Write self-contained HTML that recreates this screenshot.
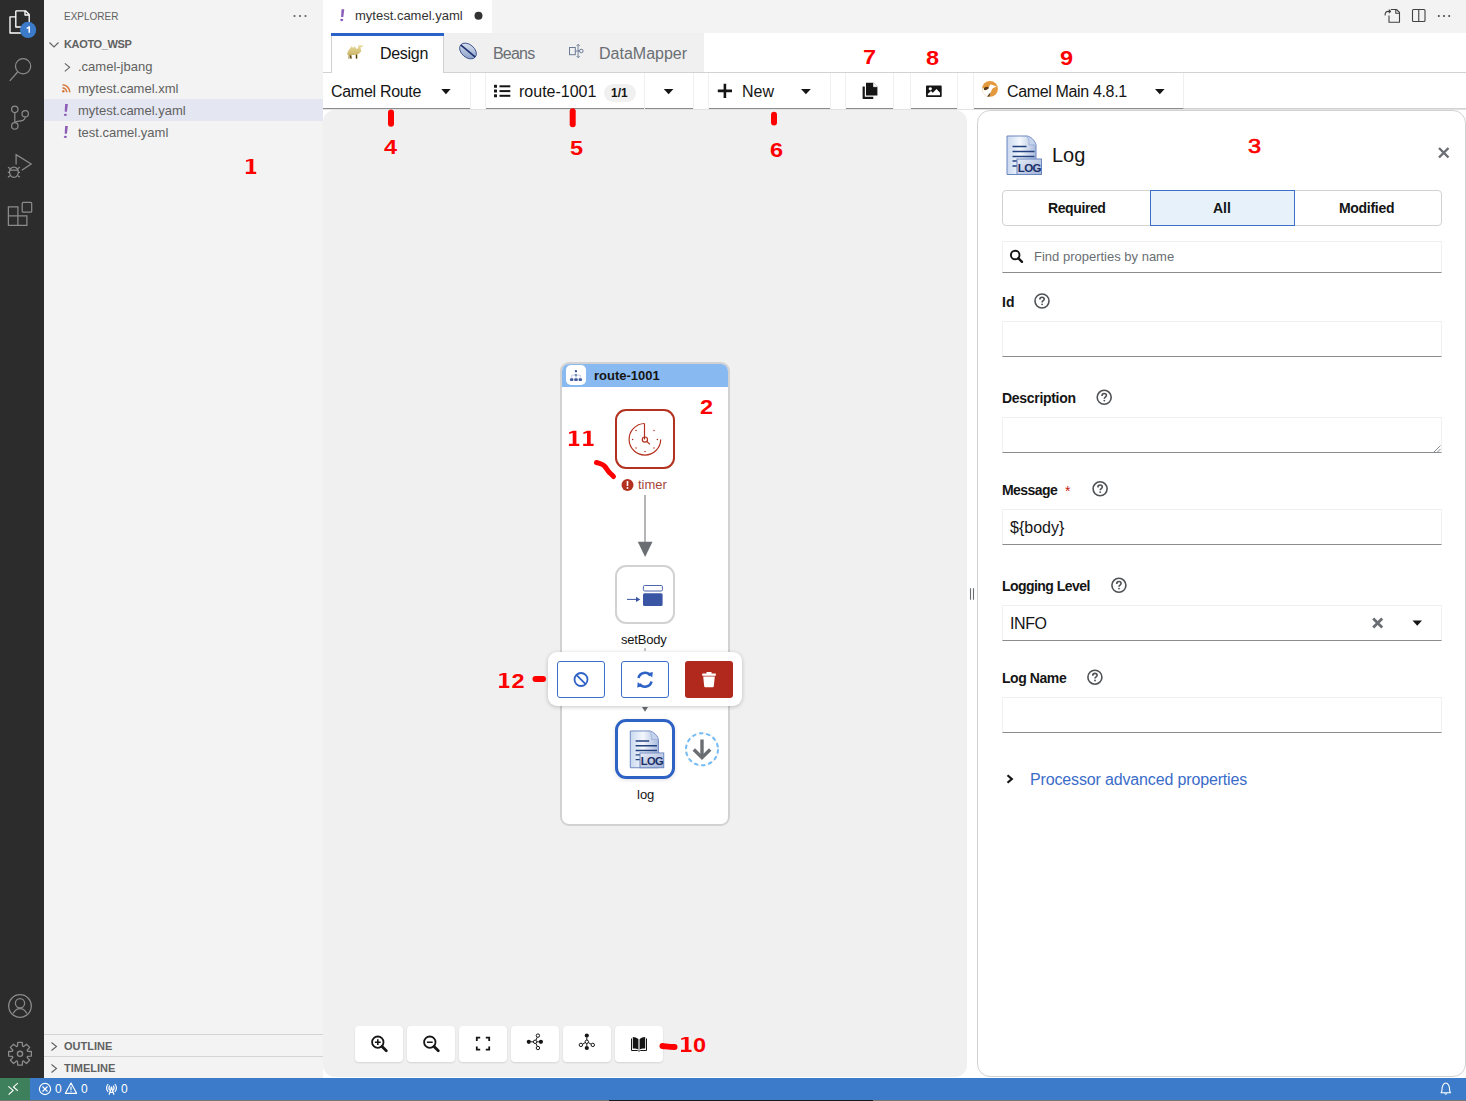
<!DOCTYPE html>
<html><head><meta charset="utf-8">
<style>
*{box-sizing:border-box;margin:0;padding:0}
html,body{width:1466px;height:1101px;overflow:hidden;background:#fff;font-family:"Liberation Sans",sans-serif;position:relative}
.a{position:absolute}
.t{position:absolute;white-space:nowrap;line-height:1}
svg{position:absolute;overflow:visible}
</style></head><body>

<!-- activity bar -->
<div class="a" style="left:0;top:0;width:44px;height:1078px;background:#2c2c2c"></div>

<!-- activity icons -->
<svg style="left:0;top:0" width="44" height="1078">
 <g fill="none" stroke="#fff" stroke-width="1.35" stroke-linejoin="round">
  <path d="M15.8 16.8 H10 V33 H21"/>
  <path d="M15.8 10.8 H25.5 L29.2 14.5 V22 M15.8 10.8 V27 H21"/>
  <path d="M25 11 V15 H29"/>
 </g>
 <circle cx="28.1" cy="29.9" r="8.1" fill="#3b7bc9"/>
 <path d="M26.3 27.9 L28.9 26.3 H30 V32.8 H28.5 V28.2 L26.9 29.1 Z" fill="#fff"/>
 <g fill="none" stroke="#8b8b8b" stroke-width="1.25">
  <circle cx="23.1" cy="66.2" r="7.6"/>
  <path d="M17.6 72 L9.8 80.8"/>
  <circle cx="14.8" cy="109.3" r="3.2"/>
  <circle cx="14.8" cy="125.9" r="3.2"/>
  <circle cx="25.2" cy="113.7" r="3.2"/>
  <path d="M14.8 112.5 V122.7 M25.2 116.9 C25.2 121 21 121 16.5 121.5 L14.8 122.5"/>
  <path d="M16.1 164.5 V154.6 L31.2 164 L21.8 170.2"/>
  <ellipse cx="13.9" cy="172.2" rx="4.4" ry="5.2"/>
  <path d="M9.5 170 H18.3 M8 167.2 L10 168.6 M19.8 167.2 L17.8 168.6 M7.8 172.3 H9.6 M18.2 172.3 H20 M8 177.3 L10 175.8 M19.8 177.3 L17.8 175.8"/>
  <rect x="22.2" y="202.4" width="9.5" height="9.8" rx="1"/>
  <path d="M8.4 206.8 H17.9 V225.3 H8.4 Z M8.4 215.9 H26.9 V225.3 H17.9"/>
  <circle cx="20" cy="1006" r="11.3"/>
  <circle cx="20" cy="1003.2" r="4.6"/>
  <path d="M13.2 1013.4 C15 1010 17.5 1008.6 20 1008.6 C22.5 1008.6 25 1010 26.8 1013.4"/>
  <circle cx="20" cy="1053.8" r="2.6" stroke-width="1.4"/>
 </g>
 <path fill="none" stroke="#8b8b8b" stroke-width="1.3" stroke-linejoin="round" d="M17.45 1046.22 L17.72 1042.43 L22.28 1042.43 L22.55 1046.22 L23.55 1046.63 L26.43 1044.14 L29.66 1047.37 L27.17 1050.25 L27.58 1051.25 L31.37 1051.52 L31.37 1056.08 L27.58 1056.35 L27.17 1057.35 L29.66 1060.23 L26.43 1063.46 L23.55 1060.97 L22.55 1061.38 L22.28 1065.17 L17.72 1065.17 L17.45 1061.38 L16.45 1060.97 L13.57 1063.46 L10.34 1060.23 L12.83 1057.35 L12.42 1056.35 L8.63 1056.08 L8.63 1051.52 L12.42 1051.25 L12.83 1050.25 L10.34 1047.37 L13.57 1044.14 L16.45 1046.63 Z"/>
</svg>

<!-- sidebar -->
<div class="a" style="left:44px;top:0;width:279px;height:1078px;background:#f3f3f3"></div>
<div class="a" style="left:44px;top:99px;width:279px;height:22px;background:#e4e6f1"></div>
<div class="t" style="left:64px;top:11.5px;font-size:10px;color:#616161">EXPLORER</div>
<div class="t" style="left:64px;top:39px;font-size:11px;font-weight:700;color:#616161;letter-spacing:-0.35px">KAOTO_WSP</div>
<div class="t" style="left:78px;top:60px;font-size:13px;color:#616161">.camel-jbang</div>
<div class="t" style="left:78px;top:82px;font-size:13px;color:#616161">mytest.camel.xml</div>
<div class="t" style="left:78px;top:104px;font-size:13px;color:#616161">mytest.camel.yaml</div>
<div class="t" style="left:78px;top:126px;font-size:13px;color:#616161">test.camel.yaml</div>

<svg style="left:0;top:0" width="330" height="1078">
 <g fill="#616161"><circle cx="294.5" cy="16" r="1.1"/><circle cx="300" cy="16" r="1.1"/><circle cx="305.5" cy="16" r="1.1"/></g>
 <g fill="none" stroke="#616161" stroke-width="1.1">
  <path d="M49.5 42.5 L54 47 L58.5 42.5"/>
  <path d="M64.8 63.3 L69.6 67.3 L64.8 71.3"/>
  <path d="M51.5 1042.5 L56.5 1046.5 L51.5 1050.5"/>
  <path d="M51.5 1064.5 L56.5 1068.5 L51.5 1072.5"/>
 </g>
 <g fill="none" stroke="#d5773a" stroke-width="1.6">
  <path d="M62.5 84.8 A7.4 7.4 0 0 1 69.7 92.2"/>
  <path d="M62.5 87.9 A4.3 4.3 0 0 1 66.7 92.2"/>
 </g>
 <circle cx="63.3" cy="91.3" r="1.2" fill="#d5773a"/>
</svg>
<svg style="left:0;top:0" width="400" height="200"><g transform="translate(0 0)" fill="#8c5db8"><path d="M65.1 104.1 H67.9 L66.9 111.8 H64.7 Z"/><ellipse cx="65.35" cy="114.9" rx="1.55" ry="1.15"/></g><g transform="translate(0 22)" fill="#8c5db8"><path d="M65.1 104.1 H67.9 L66.9 111.8 H64.7 Z"/><ellipse cx="65.35" cy="114.9" rx="1.55" ry="1.15"/></g></svg>
<div class="a" style="left:44px;top:1034px;width:279px;height:1px;background:#d4d4d4"></div>
<div class="a" style="left:44px;top:1056px;width:279px;height:1px;background:#d4d4d4"></div>
<div class="t" style="left:64px;top:1041px;font-size:11px;font-weight:700;color:#616161">OUTLINE</div>
<div class="t" style="left:64px;top:1063px;font-size:11px;font-weight:700;color:#616161">TIMELINE</div>

<!-- editor tabs -->
<div class="a" style="left:323px;top:0;width:1143px;height:33px;background:#f3f3f3"></div>
<div class="a" style="left:323px;top:0;width:169px;height:33px;background:#fff"></div>

<div class="t" style="left:355px;top:9px;font-size:13px;color:#333">mytest.camel.yaml</div>
<svg style="left:0;top:0" width="400" height="33"><g transform="translate(276.4 -94.9)" fill="#8c5db8"><path d="M65.1 104.1 H67.9 L66.9 111.8 H64.7 Z"/><ellipse cx="65.35" cy="114.9" rx="1.55" ry="1.15"/></g></svg>
<svg style="left:0;top:0" width="1466" height="33">
 <circle cx="478.5" cy="15.7" r="4" fill="#333"/>
 <g fill="none" stroke="#424242" stroke-width="1.1" stroke-linejoin="round">
  <path d="M1389 15.5 V22.3 H1399.5 V12.5 L1396.5 9.5 H1390.8"/>
  <path d="M1395.8 9.6 V13.2 H1399.4"/>
  <path d="M1385.3 15.5 A3 3 0 0 1 1388.3 11.4 H1390.5 M1388.8 9.6 L1390.6 11.4 L1388.8 13.2"/>
  <rect x="1412.5" y="9.5" width="12.5" height="12" rx="1"/>
  <path d="M1418.75 9.5 V21.5"/>
 </g>
 <g fill="#424242"><circle cx="1438.8" cy="16" r="1"/><circle cx="1444" cy="16" r="1"/><circle cx="1449.2" cy="16" r="1"/></g>
</svg>

<!-- status bar -->
<div class="a" style="left:0;top:1078px;width:1466px;height:22px;background:#3b7bc9"></div>
<div class="a" style="left:0;top:1078px;width:30px;height:22px;background:#3e7f5c"></div>
<div class="a" style="left:0;top:1100px;width:1466px;height:1px;background:#7a7672"></div>

<div class="a" style="left:609px;top:1100px;width:264px;height:1px;background:#1a1a1a"></div>
<svg style="left:0;top:1078px" width="1466" height="22">
 <g fill="none" stroke="#fff" stroke-width="1.15">
  <path d="M8.4 8.4 L13.1 12.4 L8.6 16.6"/>
  <path d="M17.8 5.1 L13.5 8.9 L17.8 12.7"/>
  <circle cx="45" cy="11" r="5.6"/>
  <path d="M42.5 8.5 L47.5 13.5 M47.5 8.5 L42.5 13.5"/>
  <path d="M71 4.9 L76.6 15.3 H65.4 Z" stroke-linejoin="round"/>
  <path d="M71 8.5 V12.2"/>
  <path d="M108.2 6 C106.3 8.3 106.3 11.7 108.2 14 M114.8 6 C116.7 8.3 116.7 11.7 114.8 14 M109.8 7.6 C108.7 9 108.7 11 109.8 12.4 M113.2 7.6 C114.3 9 114.3 11 113.2 12.4"/>
  <path d="M109 16.7 L111.5 9.6 L114 16.7 M109.8 14.3 H113.2"/>
 </g>
 <circle cx="71" cy="13.6" r="0.6" fill="#fff"/>
 <circle cx="111.5" cy="10" r="1" fill="#fff"/>
 <path d="M1441 14.8 C1441.8 14 1442 13.2 1442 11.5 C1442 8 1443.6 5 1445.8 5 C1448 5 1449.6 8 1449.6 11.5 C1449.6 13.2 1449.8 14 1450.6 14.8 Z" fill="none" stroke="#fff" stroke-width="1.1" stroke-linejoin="round"/>
 <path d="M1444.6 15.4 A1.3 1.3 0 0 0 1447 15.4" fill="none" stroke="#fff" stroke-width="1.1"/>
</svg>
<div class="t" style="left:55px;top:1083px;font-size:12px;color:#fff">0</div>
<div class="t" style="left:81px;top:1083px;font-size:12px;color:#fff">0</div>
<div class="t" style="left:121px;top:1083px;font-size:12px;color:#fff">0</div>

<!-- webview -->
<div class="a" style="left:323px;top:33px;width:1143px;height:1045px;background:#fff"></div>
<div class="a" style="left:444px;top:33px;width:260px;height:39px;background:#f0f0f0"></div>
<div class="a" style="left:323px;top:72px;width:1143px;height:1px;background:#d2d2d2"></div>
<div class="a" style="left:331px;top:33px;width:113px;height:40px;background:#fff;border-left:1px solid #d2d2d2;border-right:1px solid #d2d2d2"></div>
<div class="a" style="left:331px;top:33px;width:113px;height:3px;background:#2b62c8"></div>
<div class="t" style="left:380px;top:46px;font-size:16px;color:#151515;letter-spacing:-0.3px">Design</div>
<div class="t" style="left:493px;top:46px;font-size:16px;color:#6a6e73;letter-spacing:-0.8px">Beans</div>
<div class="t" style="left:599px;top:46px;font-size:16px;color:#6a6e73">DataMapper</div>
<svg style="left:0;top:0" width="1466" height="110">
 <defs>
  <linearGradient id="bean" x1="0" y1="0" x2="1" y2="1"><stop offset="0" stop-color="#e8eef8"/><stop offset="1" stop-color="#7d93bf"/></linearGradient>
  <linearGradient id="camelg" x1="0" y1="0" x2="0" y2="1"><stop offset="0" stop-color="#e8db9a"/><stop offset="0.6" stop-color="#d2bd72"/><stop offset="1" stop-color="#9e8749"/></linearGradient>
 </defs>
 <!-- camel -->
 <path fill="url(#camelg)" d="M347.3 54.5 C347 52.5 348.5 50.2 350 48.5 L351.6 46.2 L353 48 L354.5 46.2 L357 49.3 L358.3 47.2 L358.4 45.2 L362.8 45.6 V46.9 L360.4 47.3 L361.3 51.3 L359.2 53.4 L357.6 54.3 L357.4 58.7 H355.7 L355.4 54.8 L351.7 55.1 L352 58.7 H350.6 L349.9 55.8 L349.4 58.7 H348.3 L348.5 55.3 Z"/><path d="M350.3 55.5 L350.8 58.4 M356.5 54.8 V58.4" stroke="#4a3a1c" stroke-width="1"/>
 <!-- bean -->
 <g transform="rotate(40 468 51)"><ellipse cx="468" cy="51" rx="9.5" ry="6.5" fill="url(#bean)" stroke="#3b4f8c" stroke-width="0.9"/><path d="M458.8 51 H477.2" stroke="#1d2f72" stroke-width="1.6"/></g>
 <!-- datamapper -->
 <g fill="none" stroke="#6b7b95" stroke-width="1">
  <rect x="569.5" y="47.5" width="5.8" height="7.2"/>
  <path d="M575.3 51 H579 M579 51 C577.5 51 578.2 46 578.2 44.5 M579 51 C577.5 51 578.2 56 578.2 57.5 M576.7 45.8 L578.2 44.3 L579.7 45.8 M576.7 56.2 L578.2 57.7 L579.7 56.2"/>
  <circle cx="581.3" cy="51" r="1.8"/>
 </g>
</svg>

<!-- toolbar -->
<div class="a" style="left:323px;top:73px;width:147px;height:36px;border-bottom:1px solid #8a8d90;background:#fff"></div>
<div class="a" style="left:470px;top:73px;width:16px;height:36px;border-left:1px solid #f0f0f0;border-right:1px solid #f0f0f0"></div>
<div class="a" style="left:486px;top:73px;width:207px;height:36px;border-bottom:1px solid #8a8d90"></div>
<div class="a" style="left:644px;top:73px;width:1px;height:36px;background:#f0f0f0"></div>
<div class="a" style="left:693px;top:73px;width:16px;height:36px;border-left:1px solid #f0f0f0;border-right:1px solid #f0f0f0"></div>
<div class="a" style="left:709px;top:73px;width:121px;height:36px;border-bottom:1px solid #8a8d90"></div>
<div class="a" style="left:830px;top:73px;width:16px;height:36px;border-left:1px solid #f0f0f0;border-right:1px solid #f0f0f0"></div>
<div class="a" style="left:846px;top:73px;width:47px;height:36px;border-bottom:1px solid #8a8d90"></div>
<div class="a" style="left:893px;top:73px;width:18px;height:36px;border-left:1px solid #f0f0f0;border-right:1px solid #f0f0f0"></div>
<div class="a" style="left:911px;top:73px;width:46px;height:36px;border-bottom:1px solid #8a8d90"></div>
<div class="a" style="left:957px;top:73px;width:17px;height:36px;border-left:1px solid #f0f0f0;border-right:1px solid #f0f0f0"></div>
<div class="a" style="left:974px;top:73px;width:210px;height:36px;border-bottom:1px solid #8a8d90;border-right:1px solid #f0f0f0"></div>
<div class="a" style="left:1184px;top:108px;width:282px;height:2px;background:#d2d2d2"></div>
<div class="a" style="left:323px;top:109px;width:1143px;height:1px;background:#e2e2e2"></div>

<div class="t" style="left:331px;top:84px;font-size:16px;color:#151515;letter-spacing:-0.3px">Camel Route</div>
<div class="t" style="left:519px;top:84px;font-size:16px;color:#151515">route-1001</div>
<div class="a" style="left:604px;top:84px;width:32px;height:18px;border-radius:9px;background:#f0f0f0"></div>
<div class="t" style="left:611px;top:87px;font-size:12px;font-weight:700;color:#151515">1/1</div>
<div class="t" style="left:742px;top:84px;font-size:16px;color:#151515">New</div>
<div class="t" style="left:1007px;top:84px;font-size:16px;color:#151515;letter-spacing:-0.35px">Camel Main 4.8.1</div>
<svg style="left:0;top:0" width="1466" height="110">
 <g fill="#151515">
  <path d="M441.3 89 H450.6 L445.95 94.3 Z"/>
  <path d="M663.8 89 H673.4 L668.6 94.3 Z"/>
  <path d="M801 89 H810.8 L805.9 94.3 Z"/>
  <path d="M1155 89 H1164.6 L1159.8 94.3 Z"/>
  <!-- list icon -->
  <rect x="494" y="84.8" width="3" height="3" rx="0.5"/><rect x="494" y="89.6" width="3" height="3" rx="0.5"/><rect x="494" y="94.3" width="3" height="3" rx="0.5"/>
  <rect x="499.5" y="85.3" width="10.8" height="2" /><rect x="499.5" y="90.1" width="10.8" height="2"/><rect x="499.5" y="94.8" width="10.8" height="2"/>
  <!-- plus -->
  <path d="M723.6 83.8 H726.2 V89.6 H732 V92.2 H726.2 V98 H723.6 V92.2 H717.8 V89.6 H723.6 Z"/>
  <!-- copy -->
  <path d="M866 82.8 H873.5 L877.4 86.7 V95.5 H866 Z"/>
  <path d="M862.6 86.5 H864.8 V96.8 H873.3 V99 H863.6 C863 99 862.6 98.6 862.6 98 Z"/>
  <!-- image -->
  <path fill-rule="evenodd" d="M926 86.4 C926 85.8 926.5 85.4 927 85.4 H940.7 C941.2 85.4 941.7 85.8 941.7 86.4 V96 C941.7 96.6 941.2 97 940.7 97 H927 C926.5 97 926 96.6 926 96 Z M927.8 95.2 H940 V92.8 L936.5 89 L932.8 92.8 L931 91 L927.8 94 Z M930.3 87.2 A1.6 1.6 0 1 0 930.31 87.2 Z"/>
 </g>
 <path fill="#fff" d="M873.5 82.8 V86.7 H877.4" stroke="#fff" stroke-width="0.6"/>
 <!-- camel main icon -->
 <circle cx="990" cy="88.9" r="7.9" fill="#e49a3c"/>
 <path fill="#fff" d="M982.2 88.6 C983.8 87.8 985.8 88.9 987.6 89.1 C988.8 88 989.4 86.2 990.2 84.4 C992.5 84.8 995 85.6 996.8 86.7 C994.5 87.2 992.6 88 991.9 89.6 C991.1 91.6 990.5 94.2 988.9 96.7 C985.2 96.5 982.3 93 982.2 88.6 Z"/>
 <ellipse cx="986.2" cy="88.4" rx="2.6" ry="1.5" transform="rotate(-20 986.2 88.4)" fill="#5a3a14"/>
 <path fill="#5a3a14" d="M987 96.6 L990.6 92.3 C990.3 93.8 989.9 95.4 989.2 96.8 Z"/>
</svg>

<!-- canvas -->
<div class="a" style="left:323px;top:110px;width:644px;height:967px;background:#f0f0f0;border-radius:12px"></div>
<!-- route container -->
<div class="a" style="left:560px;top:362px;width:170px;height:464px;background:#fff;border:2px solid #d2d2d2;border-radius:9px;overflow:hidden">
  <div class="a" style="left:0;top:0;width:166px;height:23px;background:#88b9f0"></div>
  <div class="a" style="left:4px;top:1px;width:20px;height:20px;background:#fff;border-radius:5px"></div>
</div>
<div class="t" style="left:594px;top:369px;font-size:13px;font-weight:700;color:#151515">route-1001</div>
<!-- timer node -->
<div class="a" style="left:615px;top:409px;width:60px;height:60px;border:2px solid #b3321f;border-radius:11px;background:#fff"></div>
<div class="t" style="left:638px;top:478px;font-size:13px;color:#a4473a">timer</div>
<!-- setBody node -->
<div class="a" style="left:615px;top:565px;width:60px;height:59px;border:2px solid #d2d2d2;border-radius:11px;background:#fff"></div>
<div class="t" style="left:621px;top:633px;font-size:13px;color:#151515;letter-spacing:-0.2px">setBody</div>
<!-- log node -->
<div class="a" style="left:615px;top:719px;width:60px;height:60px;border:3px solid #2e62c5;border-radius:11px;background:#fff;box-shadow:0 1px 4px rgba(0,0,0,0.12)"></div>
<div class="t" style="left:637px;top:788px;font-size:13px;color:#151515">log</div>
<svg style="left:0;top:0" width="1466" height="1078">
 <!-- route icon -->
 <g fill="#3e5aa0">
  <rect x="574.9" y="369.9" width="2.1" height="2.4" rx="0.6"/>
  <rect x="574.9" y="373.9" width="2.1" height="2.4" rx="0.6"/>
  <rect x="570" y="378.3" width="3.4" height="2.7" rx="0.9"/>
  <rect x="574.2" y="378.3" width="3.6" height="2.7" rx="0.9"/>
  <rect x="578.6" y="378.3" width="3.4" height="2.7" rx="0.9"/>
 </g>
 <path d="M571.7 378.3 V375.1 H580.3 V378.3 M576 376.3 V378.3" fill="none" stroke="#b8c2d6" stroke-width="0.8"/>
 <!-- clock -->
 <g fill="none" stroke="#b3321f" stroke-width="1.2">
  <path d="M644.5 423.5 A15.8 15.8 0 1 0 660.7 439.5"/>
  <path d="M644.5 423.5 V439.5"/>
  <circle cx="644.9" cy="439.6" r="2.6"/>
  <path d="M646.7 441.4 L649.8 444.2"/>
 </g>
 <g fill="#b3321f">
  <circle cx="636" cy="430.5" r="0.75"/><circle cx="654" cy="430.5" r="0.75"/>
  <circle cx="632.6" cy="439.5" r="0.75"/><circle cx="657.4" cy="439.5" r="0.75"/>
  <circle cx="636" cy="448" r="0.75"/><circle cx="654" cy="448" r="0.75"/>
  <circle cx="645" cy="451.5" r="0.75"/>
 </g>
 <!-- error icon -->
 <circle cx="627.5" cy="485" r="6" fill="#b3321f"/>
 <rect x="626.7" y="481" width="1.6" height="5" rx="0.6" fill="#fff"/>
 <circle cx="627.5" cy="488" r="0.9" fill="#fff"/>
 <!-- edges -->
 <path d="M645 495 V543" stroke="#8a8d90" stroke-width="1.3"/>
 <path d="M637.8 541.7 H652.5 L645.1 557 Z" fill="#6a6e73"/>
 <path d="M645 648 V651" stroke="#8a8d90" stroke-width="1"/>
 <path d="M642 707 H648 L645 711.8 Z" fill="#6a6e73"/>
 <!-- setBody icon -->
 <rect x="643.4" y="585.5" width="19" height="5.5" rx="1.2" fill="none" stroke="#3955a3" stroke-width="0.9"/>
 <rect x="643" y="593.3" width="19.6" height="12.8" rx="1.5" fill="#3955a3"/>
 <path d="M627 599.4 H636" stroke="#3955a3" stroke-width="1"/>
 <path d="M636 596.8 L640.3 599.4 L636 602 Z" fill="#3955a3"/>
 <!-- log doc icon (canvas) -->
 <g id="logicon">
  <defs>
   <linearGradient id="docg" x1="0" y1="0" x2="1" y2="0"><stop offset="0" stop-color="#c9d8ef"/><stop offset="0.45" stop-color="#f4f8fd"/><stop offset="1" stop-color="#a9badd"/></linearGradient>
   <linearGradient id="badg" x1="0" y1="0" x2="1" y2="1"><stop offset="0" stop-color="#e8eef8"/><stop offset="1" stop-color="#9fb1d6"/></linearGradient>
  </defs>
 </g>
 <g transform="translate(629.8 730.5) scale(0.97 0.955)">
  <path d="M0.5 0.5 H20 C24 0.5 29.5 6 29.5 10 V39 H0.5 Z" fill="url(#docg)" stroke="#6b86bf" stroke-width="1"/>
  <path d="M20 0.5 C22 3 23 6 22.5 9.5 C25.5 9 28 9.2 29.5 10 C29 6 24 1 20 0.5 Z" fill="#c5d3ec" stroke="#8ea3cf" stroke-width="0.6"/>
  <path d="M6 11 H20 M6 16 H28 M6 21 H28 M6 25.5 H11 M6 30.5 H11" stroke="#23407f" stroke-width="1.5"/>
  <rect x="10.5" y="23.5" width="24.5" height="15.5" fill="url(#badg)" stroke="#6b86bf" stroke-width="1"/>
  <text x="22.8" y="36.3" font-family="Liberation Sans" font-weight="700" font-size="11.5" fill="#1b3068" text-anchor="middle" letter-spacing="-0.6">LOG</text>
 </g>
 <!-- dashed add circle -->
 <circle cx="702" cy="749.3" r="17" fill="#000" opacity="0.06"/><circle cx="702" cy="749.3" r="16" fill="#fff" stroke="#73bcf7" stroke-width="2" stroke-dasharray="4.2 3"/>
 <path d="M702 739.5 V757" stroke="#6a6e73" stroke-width="3.4"/>
 <path d="M693.8 749.5 L702 757.7 L710.2 749.5" fill="none" stroke="#6a6e73" stroke-width="3.4"/>
</svg>
<!-- popup toolbar -->
<div class="a" style="left:548px;top:652px;width:194px;height:54px;background:#fff;border-radius:9px;box-shadow:0 1px 4px rgba(0,0,0,0.22)"></div>
<div class="a" style="left:557px;top:661px;width:48px;height:37px;border:1px solid #3b6fcc;border-radius:3px"></div>
<div class="a" style="left:621px;top:661px;width:48px;height:37px;border:1px solid #3b6fcc;border-radius:3px"></div>
<div class="a" style="left:685px;top:661px;width:48px;height:37px;background:#b1291d;border-radius:3px"></div>
<svg style="left:0;top:0" width="1466" height="1078">
 <circle cx="581" cy="679.5" r="6.5" fill="none" stroke="#2e62c5" stroke-width="1.8"/>
 <path d="M576.6 675.1 L585.4 683.9" stroke="#2e62c5" stroke-width="1.8"/>
 <g fill="none" stroke="#2e62c5" stroke-width="2.6">
  <path d="M638.5 678 A6.6 6.6 0 0 1 650.3 675.5"/>
  <path d="M651.5 681.5 A6.6 6.6 0 0 1 639.7 684"/>
 </g>
 <path d="M647.5 673.2 L652.8 672 L652.2 677.5 Z M642.5 686.3 L637.2 687.5 L637.8 682 Z" fill="#2e62c5"/>
 <path d="M702.2 673.5 H715.8 V675.7 H702.2 Z M706.5 672 H711.5 V673.5 H706.5 Z M703.2 676.5 H714.8 L713.8 686.2 C713.7 686.8 713.2 687.2 712.6 687.2 H705.4 C704.8 687.2 704.3 686.8 704.2 686.2 Z" fill="#fff"/>
</svg>
<!-- bottom controls -->
<div class="a" style="left:355px;top:1026px;width:48px;height:36px;background:#fff;border-radius:4px;box-shadow:0 1px 2px rgba(0,0,0,0.12)"></div>
<div class="a" style="left:407px;top:1026px;width:48px;height:36px;background:#fff;border-radius:4px;box-shadow:0 1px 2px rgba(0,0,0,0.12)"></div>
<div class="a" style="left:459px;top:1026px;width:48px;height:36px;background:#fff;border-radius:4px;box-shadow:0 1px 2px rgba(0,0,0,0.12)"></div>
<div class="a" style="left:511px;top:1026px;width:48px;height:36px;background:#fff;border-radius:4px;box-shadow:0 1px 2px rgba(0,0,0,0.12)"></div>
<div class="a" style="left:563px;top:1026px;width:48px;height:36px;background:#fff;border-radius:4px;box-shadow:0 1px 2px rgba(0,0,0,0.12)"></div>
<div class="a" style="left:615px;top:1026px;width:48px;height:36px;background:#fff;border-radius:4px;box-shadow:0 1px 2px rgba(0,0,0,0.12)"></div>
<svg style="left:0;top:0" width="1466" height="1078">
 <g fill="none" stroke="#151515" stroke-width="1.8">
  <circle cx="377.8" cy="1042.2" r="5.7"/>
  <circle cx="429.8" cy="1042.2" r="5.7"/>
 </g>
 <path d="M382 1046.4 L386.3 1050.7 M434 1046.4 L438.3 1050.7" stroke="#151515" stroke-width="2.8" stroke-linecap="round"/>
 <path d="M374.9 1042.2 H380.7 M377.8 1039.3 V1045.1 M426.9 1042.2 H432.7" stroke="#151515" stroke-width="1.6"/>
 <path d="M476.8 1041 V1037.7 H480.2 M485.8 1037.7 H489.2 V1041 M489.2 1046.4 V1049.7 H485.8 M480.2 1049.7 H476.8 V1046.4" fill="none" stroke="#151515" stroke-width="1.8"/>
 <!-- layout horizontal -->
 <g fill="#151515">
  <circle cx="528.8" cy="1041.8" r="2.1"/><circle cx="540.9" cy="1041.8" r="2.1"/>
  <circle cx="586.8" cy="1035.6" r="2.1"/><circle cx="586.8" cy="1048" r="2.1"/>
 </g>
 <g fill="#fff" stroke="#151515" stroke-width="1">
  <path d="M530.8 1041.8 H533.3 M536.9 1041.8 H538.8 M535.9 1040.2 L537.2 1037.3 M535.9 1043.4 L537.2 1046.3" fill="none"/>
  <circle cx="535.1" cy="1041.8" r="1.7"/><circle cx="537.9" cy="1035.6" r="1.7"/><circle cx="537.9" cy="1048" r="1.7"/>
  <path d="M586.8 1037.7 V1040.1 M586.8 1043.5 V1045.9 M585.2 1042.6 L582.5 1044.2 M588.4 1042.6 L591.1 1044.2" fill="none"/>
  <circle cx="586.8" cy="1041.8" r="1.7"/><circle cx="580.9" cy="1044.9" r="1.7"/><circle cx="592.8" cy="1044.9" r="1.7"/>
 </g>
 <!-- book -->
 <path d="M631.5 1038.5 V1050.5 H637.5 C638 1050.5 638.3 1051 638.8 1051 H639.2 C639.7 1051 640 1050.5 640.5 1050.5 H646.5 V1038.5" fill="none" stroke="#151515" stroke-width="1"/>
 <path d="M632.8 1037 C634.8 1037 636.8 1037.8 638.3 1039 V1049.5 C636.8 1048.6 634.8 1048.3 632.8 1048.4 Z M645.2 1037 C643.2 1037 641.2 1037.8 639.7 1039 V1049.5 C641.2 1048.6 643.2 1048.3 645.2 1048.4 Z" fill="#151515"/>
 <path d="M639 1039.5 V1049.8" stroke="#888" stroke-width="1.2"/>
</svg>
<!-- separator -->
<svg style="left:0;top:0" width="1466" height="1078">
 <path d="M970.5 588.3 V599.7 M973.5 588.3 V599.7" stroke="#6a6e73" stroke-width="1.1"/>
</svg>

<!-- right panel -->
<div class="a" style="left:977px;top:110px;width:489px;height:967px;background:#fff;border:1px solid #d2d2d2;border-radius:13px"></div>
<svg style="left:0;top:0" width="1466" height="1078">
 <g transform="translate(1006.5 135.5)">
  <path d="M0.5 0.5 H20 C24 0.5 29.5 6 29.5 10 V39 H0.5 Z" fill="url(#docg)" stroke="#6b86bf" stroke-width="1"/>
  <path d="M20 0.5 C22 3 23 6 22.5 9.5 C25.5 9 28 9.2 29.5 10 C29 6 24 1 20 0.5 Z" fill="#c5d3ec" stroke="#8ea3cf" stroke-width="0.6"/>
  <path d="M6 11 H20 M6 16 H28 M6 21 H28 M6 25.5 H11 M6 30.5 H11" stroke="#23407f" stroke-width="1.5"/>
  <rect x="10.5" y="23.5" width="24.5" height="15.5" fill="url(#badg)" stroke="#6b86bf" stroke-width="1"/>
  <text x="22.8" y="36.3" font-family="Liberation Sans" font-weight="700" font-size="11.5" fill="#1b3068" text-anchor="middle" letter-spacing="-0.6">LOG</text>
 </g>
 <path d="M1439 148 L1448.5 157.5 M1448.5 148 L1439 157.5" stroke="#6a6e73" stroke-width="2.4"/>
</svg>
<div class="t" style="left:1052px;top:145px;font-size:20px;color:#151515">Log</div>

<!-- toggle group -->
<div class="a" style="left:1002px;top:190px;width:440px;height:36px;border:1px solid #d2d2d2;border-radius:4px"></div>
<div class="a" style="left:1150px;top:190px;width:145px;height:36px;border:1px solid #3b6fcc;background:#e7f1fa"></div>
<div class="t" style="left:1048px;top:201px;font-size:14px;font-weight:700;color:#151515;letter-spacing:-0.4px">Required</div>
<div class="t" style="left:1213px;top:201px;font-size:14px;font-weight:700;color:#151515">All</div>
<div class="t" style="left:1339px;top:201px;font-size:14px;font-weight:700;color:#151515;letter-spacing:-0.3px">Modified</div>

<!-- search -->
<div class="a" style="left:1002px;top:241px;width:440px;height:32px;border:1px solid #f0f0f0;border-bottom:1px solid #8a8d90"></div>
<svg style="left:0;top:0" width="1466" height="1078">
 <circle cx="1015.2" cy="255" r="4.3" fill="none" stroke="#151515" stroke-width="1.9"/>
 <path d="M1018.3 258.1 L1022 261.8" stroke="#151515" stroke-width="2.4" stroke-linecap="round"/>
</svg>
<div class="t" style="left:1034px;top:250px;font-size:13px;color:#6a6e73">Find properties by name</div>

<!-- fields -->
<div class="t" style="left:1002px;top:295px;font-size:14px;font-weight:700;color:#151515">Id</div>
<div class="a" style="left:1002px;top:321px;width:440px;height:36px;border:1px solid #f0f0f0;border-bottom:1px solid #8a8d90"></div>

<div class="t" style="left:1002px;top:391px;font-size:14px;font-weight:700;color:#151515;letter-spacing:-0.3px">Description</div>
<div class="a" style="left:1002px;top:417px;width:440px;height:36px;border:1px solid #f0f0f0;border-bottom:1px solid #8a8d90"></div>

<div class="t" style="left:1002px;top:483px;font-size:14px;font-weight:700;color:#151515;letter-spacing:-0.55px">Message</div>
<div class="t" style="left:1065px;top:484px;font-size:14px;color:#c9190b">*</div>
<div class="a" style="left:1002px;top:509px;width:440px;height:36px;border:1px solid #f0f0f0;border-bottom:1px solid #8a8d90"></div>
<div class="t" style="left:1010px;top:520px;font-size:16px;color:#151515">${body}</div>

<div class="t" style="left:1002px;top:579px;font-size:14px;font-weight:700;color:#151515;letter-spacing:-0.55px">Logging Level</div>
<div class="a" style="left:1002px;top:605px;width:440px;height:36px;border:1px solid #f0f0f0;border-bottom:1px solid #8a8d90"></div>
<div class="t" style="left:1010px;top:616px;font-size:16px;color:#151515;letter-spacing:-0.4px">INFO</div>

<div class="t" style="left:1002px;top:671px;font-size:14px;font-weight:700;color:#151515;letter-spacing:-0.43px">Log Name</div>
<div class="a" style="left:1002px;top:697px;width:440px;height:36px;border:1px solid #f0f0f0;border-bottom:1px solid #8a8d90"></div>

<div class="t" style="left:1030px;top:772px;font-size:16px;color:#3a6cc8;letter-spacing:-0.15px">Processor advanced properties</div>

<svg style="left:0;top:0" width="1466" height="1078">
 <g fill="none" stroke="#4f5255" stroke-width="1.6">
  <circle cx="1042" cy="301" r="7"/>
  <circle cx="1104.2" cy="397.3" r="7"/>
  <circle cx="1100.1" cy="488.8" r="7"/>
  <circle cx="1118.9" cy="585.3" r="7"/>
  <circle cx="1094.9" cy="677.2" r="7"/>
 </g>
 <g id="q" fill="none" stroke="#4f5255" stroke-width="1.6">
  <path d="M1039.8 299.6 C1039.8 297.9 1040.8 297.2 1042 297.2 C1043.3 297.2 1044.2 298 1044.2 299.2 C1044.2 300.7 1042.1 300.8 1042.1 302.4"/>
  <path d="M1102 395.9 C1102 394.2 1103 393.5 1104.2 393.5 C1105.5 393.5 1106.4 394.3 1106.4 395.5 C1106.4 397 1104.3 397.1 1104.3 398.7"/>
  <path d="M1097.9 487.4 C1097.9 485.7 1098.9 485 1100.1 485 C1101.4 485 1102.3 485.8 1102.3 487 C1102.3 488.5 1100.2 488.6 1100.2 490.2"/>
  <path d="M1116.7 583.9 C1116.7 582.2 1117.7 581.5 1118.9 581.5 C1120.2 581.5 1121.1 582.3 1121.1 583.5 C1121.1 585 1119 585.1 1119 586.7"/>
  <path d="M1092.7 675.8 C1092.7 674.1 1093.7 673.4 1094.9 673.4 C1096.2 673.4 1097.1 674.2 1097.1 675.4 C1097.1 676.9 1095 677 1095 678.6"/>
 </g>
 <g fill="#4f5255">
  <circle cx="1042.1" cy="304.3" r="0.9"/>
  <circle cx="1104.3" cy="400.6" r="0.9"/>
  <circle cx="1100.2" cy="492.1" r="0.9"/>
  <circle cx="1119" cy="588.6" r="0.9"/>
  <circle cx="1095" cy="680.5" r="0.9"/>
 </g>
 <!-- textarea resize -->
 <path d="M1440.5 445.5 L1434 452 M1440.5 449 L1437.5 452" stroke="#6a6e73" stroke-width="0.8"/>
 <!-- select x and caret -->
 <path d="M1373.2 618.5 L1382.2 627.5 M1382.2 618.5 L1373.2 627.5" stroke="#6a6e73" stroke-width="2.8"/>
 <path d="M1412.5 620.5 H1422 L1417.25 625.8 Z" fill="#151515"/>
 <!-- chevron -->
 <path d="M1007.5 775.2 L1011.8 779 L1007.5 782.8" fill="none" stroke="#151515" stroke-width="2.2"/>
</svg>

<!-- annotations -->
<svg style="left:0;top:0" width="1466" height="1101"><g fill="#ff0000">
<path d="M249.60 161.10 L246.00 162.10 V160.30 L250.00 158.90 H253.30 V171.80 H256.20 V174.00 H245.80 V171.80 H249.60 Z"/>
<path d="M572.70 433.00 L569.10 434.00 V432.20 L573.10 430.80 H576.40 V443.70 H579.30 V445.90 H568.90 V443.70 H572.70 Z"/><path d="M587.00 433.00 L583.40 434.00 V432.20 L587.40 430.80 H590.70 V443.70 H593.60 V445.90 H583.20 V443.70 H587.00 Z"/>
<path d="M684.84 1039.10 L681.20 1040.10 V1038.30 L685.24 1036.90 H688.57 V1049.80 H691.50 V1052.00 H681.00 V1049.80 H684.84 Z"/>
<path d="M502.83 675.09 L499.30 676.08 V674.29 L503.22 672.90 H506.46 V685.71 H509.30 V687.90 H499.10 V685.71 H502.83 Z"/>
</g>
<g fill="#ff0000" font-family="Liberation Sans" font-weight="700" font-size="21">
<text transform="translate(700.1 414.1) scale(1.12 1)">2</text>
<text transform="translate(1248.1 153.0) scale(1.12 1)" font-weight="400" stroke="#ff0000" stroke-width="0.7">3</text>
<text transform="translate(383.9 154.0) scale(1.12 1)">4</text>
<text transform="translate(569.9 154.9) scale(1.12 1)">5</text>
<text transform="translate(769.9 156.8) scale(1.12 1)">6</text>
<text transform="translate(863.0 64.2) scale(1.12 1)">7</text>
<text transform="translate(926.1 64.9) scale(1.12 1)">8</text>
<text transform="translate(1060.0 65.0) scale(1.12 1)">9</text>
<text transform="translate(693.1 1052.0) scale(1.12 1)">0</text>
<text transform="translate(511.5 687.9) scale(1.12 1)">2</text>
</g>
<g stroke="#ff0000" stroke-linecap="round" fill="none">
<path d="M391 112.5 V123.8" stroke-width="6"/>
<path d="M572.7 111.3 V124.2" stroke-width="6"/>
<path d="M774 114.7 V122.5" stroke-width="6"/>
<path d="M596.5 462.5 C600 463.5 603 464 605 466.5 C607 469.5 608.5 472.5 611.5 474.5 L613.5 476.5" stroke-width="5"/>
<path d="M535.5 678.9 H543" stroke-width="6"/>
<path d="M662.5 1046 C666 1046.3 669 1047 674.5 1047" stroke-width="6"/>
</g></svg>
</body></html>
